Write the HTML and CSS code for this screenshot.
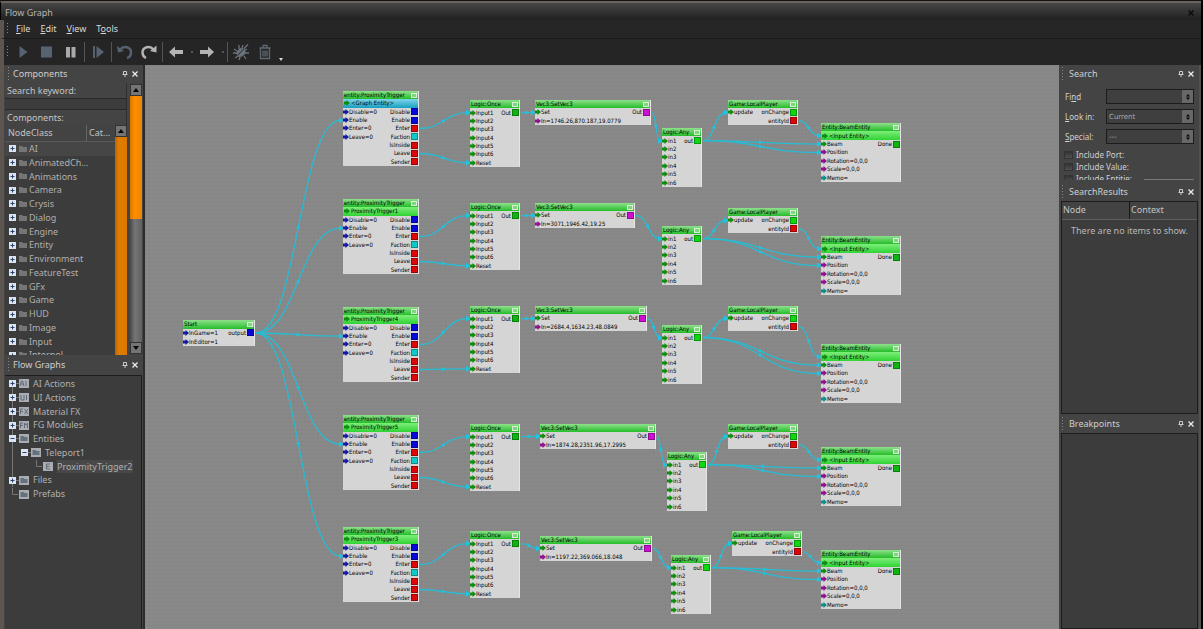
FILE: index.html
```html
<!DOCTYPE html>
<html lang="en">
<head>
<meta charset="utf-8">
<title>Flow Graph</title>
<link rel="stylesheet" href="styles.css">
</head>
<body>
<div class="window">
  <header class="titlebar">
    <h1 class="title">Flow Graph</h1>
    <button class="close" aria-label="Close window"><svg width="6" height="6" viewBox="0 0 6 6"><path d="M.5.5l5 5M5.5.5l-5 5" stroke="#0c0c0c" stroke-width="1.5"/></svg></button>
  </header>
  <nav class="menubar">
    <span class="grip"></span>
    <button class="menu"><u>F</u>ile</button>
    <button class="menu"><u>E</u>dit</button>
    <button class="menu"><u>V</u>iew</button>
    <button class="menu">T<u>o</u>ols</button>
  </nav>
  <div class="toolbar">
    <span class="grip"></span>
    <button class="tool" aria-label="Play"><svg width="16" height="16" viewBox="0 0 16 16"><path d="M4.500 2v12L12.500 8z" fill="#566270"/></svg></button>
    <button class="tool" aria-label="Stop"><svg width="16" height="16" viewBox="0 0 16 16"><rect x="2" y="2.500" width="11" height="11" fill="#566270"/></svg></button>
    <button class="tool" aria-label="Pause"><svg width="16" height="16" viewBox="0 0 16 16"><path d="M3 3h4v10.500H3zM8.500 3h4v10.500h-4z" fill="#a9a9a9"/></svg></button>
    <span class="sep"></span>
    <button class="tool" aria-label="Step"><svg width="16" height="16" viewBox="0 0 16 16"><path d="M3 2h2v12H3zM6.500 2v12L14 8z" fill="#566270"/></svg></button>
    <span class="sep"></span>
    <button class="tool" aria-label="Undo"><svg width="18" height="16" viewBox="0 0 18 16"><path d="M4 5.500C8 1 15 3 15 8.500c0 3-2 5-4 5.500" fill="none" stroke="#566270" stroke-width="2.400"/><path d="M1 2l1 6.500L8 7z" fill="#566270"/></svg></button>
    <button class="tool" aria-label="Redo"><svg width="18" height="16" viewBox="0 0 18 16"><path d="M13.500 5.500C10 1 2.500 3 2.500 8.500c0 3 1.500 4.500 3.500 5.500" fill="none" stroke="#b4b4b4" stroke-width="2.400"/><path d="M16.500 1.500v7L10 7z" fill="#b4b4b4"/></svg></button>
    <span class="sep"></span>
    <button class="tool" aria-label="Back"><svg width="16" height="16" viewBox="0 0 16 16"><path d="M1 8l6-5.500V6h8v4H7v3.500z" fill="#b4b4b4"/></svg></button>
    <span class="dot"></span>
    <button class="tool" aria-label="Forward"><svg width="16" height="16" viewBox="0 0 16 16"><path d="M15 8L9 2.500V6H1v4h8v3.500z" fill="#b4b4b4"/></svg></button>
    <span class="dot"></span>
    <span class="sep"></span>
    <button class="tool" aria-label="Debug"><svg width="18" height="18" viewBox="0 0 18 18"><g stroke="#69717c" stroke-width="1.300" fill="none"><path d="M7 6V2M10 5l1-3M5 8L2 6M5 10H1M6 13l-3 2M8 14l-1 3M12 13l2 3M13 10h4M13 7l2-1"/></g><ellipse cx="9" cy="9.500" rx="5" ry="4" transform="rotate(-40 9 9.500)" fill="#69717c"/><path d="M5.500 12.500L15.500 2" stroke="#252525" stroke-width="1"/><path d="M12 5.500l4-4" stroke="#69717c" stroke-width="1.500"/></svg></button>
    <button class="tool" aria-label="Delete"><svg width="14" height="16" viewBox="0 0 14 16"><g fill="none" stroke="#606873" stroke-width="1.300"><path d="M1.500 4h11M5 4V1.500h4V4M2.500 4v10.500h9V4M5 6.500v6M7 6.500v6M9 6.500v6"/></g></svg></button>
    <button class="overflow" aria-label="More tools"><svg width="4" height="3" viewBox="0 0 4 3"><path d="M0 0h4L2 3z" fill="#ddd"/></svg></button>
  </div>

  <main class="workspace">
    <aside class="dock dock-left">
      <section class="panel panel-components">
        <header class="panel-head"><span class="grip"></span><h2>Components</h2>
          <button class="mini" aria-label="Pin"><svg width="6" height="7" viewBox="0 0 6 7"><path d="M1.500 3.500V.5h3v3M.5 3.500h5M3 3.500V6" fill="none" stroke="#ccc"/></svg></button>
          <button class="mini" aria-label="Close"><svg width="6" height="6" viewBox="0 0 6 6"><path d="M.5.5l5 5M5.500.5l-5 5" stroke="#eee" stroke-width="1.200"/></svg></button>
        </header>
        <div class="components-row">
          <div class="components-main">
            <label class="field-label" for="keyword">Search keyword:</label>
            <input class="keyword" id="keyword" type="text">
            <span class="field-label">Components:</span>
            <div class="class-list">
              <div class="class-main">
                <div class="class-head"><span class="col-class">NodeClass</span><span class="col-cat">Cat...</span></div>
                <ul class="tree" id="classes"></ul>
              </div>
              <div class="scroll scroll-inner"><button class="scroll-btn" aria-label="Scroll up"><svg width="6" height="4" viewBox="0 0 6 4"><path d="M0 4h6L3 0z" fill="#080808"/></svg></button><span class="thumb"></span></div>
            </div>
          </div>
          <div class="scroll scroll-outer"><button class="scroll-btn" aria-label="Scroll up"><svg width="6" height="4" viewBox="0 0 6 4"><path d="M0 4h6L3 0z" fill="#080808"/></svg></button><span class="thumb"></span><span class="track"></span><button class="scroll-btn" aria-label="Scroll down"><svg width="6" height="4" viewBox="0 0 6 4"><path d="M0 0h6L3 4z" fill="#080808"/></svg></button></div>
        </div>
      </section>
      <section class="panel panel-graphs">
        <header class="panel-head"><span class="grip"></span><h2>Flow Graphs</h2>
          <button class="mini" aria-label="Pin"><svg width="6" height="7" viewBox="0 0 6 7"><path d="M1.500 3.500V.5h3v3M.5 3.500h5M3 3.500V6" fill="none" stroke="#ccc"/></svg></button>
          <button class="mini" aria-label="Close"><svg width="6" height="6" viewBox="0 0 6 6"><path d="M.5.5l5 5M5.500.5l-5 5" stroke="#eee" stroke-width="1.200"/></svg></button>
        </header>
        <ul class="tree graphs" id="graphs"></ul>
      </section>
    </aside>

    <div class="canvas" id="canvas"></div>

    <aside class="dock dock-right">
      <section class="panel panel-search">
        <header class="panel-head"><span class="grip"></span><h2>Search</h2>
          <button class="mini" aria-label="Pin"><svg width="6" height="7" viewBox="0 0 6 7"><path d="M1.500 3.500V.5h3v3M.5 3.500h5M3 3.500V6" fill="none" stroke="#ccc"/></svg></button>
          <button class="mini" aria-label="Close"><svg width="6" height="6" viewBox="0 0 6 6"><path d="M.5.5l5 5M5.500.5l-5 5" stroke="#eee" stroke-width="1.200"/></svg></button>
        </header>
        <form class="search-form">
          <div class="combo-row"><label for="find">Fi<u>n</u>d</label><span class="combo"><select id="find"><option></option></select><span class="spin"><svg width="4" height="6" viewBox="0 0 4 6"><path d="M0 2.500h4L2 0zM0 3.500h4L2 6z" fill="#080808"/></svg></span></span></div>
          <div class="combo-row"><label for="lookin"><u>L</u>ook in:</label><span class="combo"><select id="lookin"><option>Current</option></select><span class="spin"><svg width="4" height="6" viewBox="0 0 4 6"><path d="M0 2.500h4L2 0zM0 3.500h4L2 6z" fill="#080808"/></svg></span></span></div>
          <div class="combo-row"><label for="special"><u>S</u>pecial:</label><span class="combo"><select id="special"><option>---</option></select><span class="spin"><svg width="4" height="6" viewBox="0 0 4 6"><path d="M0 2.500h4L2 0zM0 3.500h4L2 6z" fill="#080808"/></svg></span></span></div>
          <div class="checks">
            <label><input type="checkbox">Include Port:</label>
            <label><input type="checkbox">Include Value:</label>
            <label><input type="checkbox">Include Entitie:<span class="find-edge"></span></label>
          </div>
        </form>
      </section>
      <section class="panel panel-results">
        <header class="panel-head"><span class="grip"></span><h2>SearchResults</h2>
          <button class="mini" aria-label="Pin"><svg width="6" height="7" viewBox="0 0 6 7"><path d="M1.500 3.500V.5h3v3M.5 3.500h5M3 3.500V6" fill="none" stroke="#ccc"/></svg></button>
          <button class="mini" aria-label="Close"><svg width="6" height="6" viewBox="0 0 6 6"><path d="M.5.5l5 5M5.500.5l-5 5" stroke="#eee" stroke-width="1.200"/></svg></button>
        </header>
        <div class="well">
          <table class="results">
            <thead><tr><th>Node</th><th>Context</th></tr></thead>
            <tbody><tr><td colspan="2">There are no items to show.</td></tr></tbody>
          </table>
        </div>
      </section>
      <section class="panel panel-breakpoints">
        <header class="panel-head"><span class="grip"></span><h2>Breakpoints</h2>
          <button class="mini" aria-label="Pin"><svg width="6" height="7" viewBox="0 0 6 7"><path d="M1.500 3.500V.5h3v3M.5 3.500h5M3 3.500V6" fill="none" stroke="#ccc"/></svg></button>
          <button class="mini" aria-label="Close"><svg width="6" height="6" viewBox="0 0 6 6"><path d="M.5.5l5 5M5.500.5l-5 5" stroke="#eee" stroke-width="1.200"/></svg></button>
        </header>
        <div class="well"></div>
      </section>
    </aside>
  </main>
</div>
<script src="graph.js"></script>
</body>
</html>
```

FILE: styles.css
```css
* { box-sizing: border-box; }
body {
  margin: 0;
  background: #000;
  color: #c4c4c4;
  font: 9px/14px "Noto Sans", "Open Sans", sans-serif;
}
button {
  margin: 0;
  padding: 0;
  border: 0;
  background: none;
  color: inherit;
  font: inherit;
}
h1, h2 { margin: 0; font-size: inherit; font-weight: normal; }
ul { margin: 0; padding: 0; list-style: none; }
svg { display: block; }

.window {
  display: flex;
  flex-direction: column;
  height: 100vh;
  border-top: 1px solid #111;
  border-right: 2px solid #000;
}
.titlebar {
  display: flex;
  align-items: center;
  justify-content: space-between;
  height: 19px;
  padding: 2px 7px 0 4px;
  border-top: 2px solid #6d625c;
  border-left: 1px solid #000;
  background: linear-gradient(#464646, #202020);
  color: #b4b4b4;
}
.menubar {
  display: flex;
  align-items: center;
  height: 19px;
  padding-left: 3px;
  border-left: 4px solid #5c5550;
  border-bottom: 1px solid #1b1b1b;
  background: #262626;
}
.menu { margin-left: 10px; color: #d8d8d8; }
.menubar .grip + .menu { margin-left: 8px; }
.grip {
  width: 1px;
  height: 12px;
  background: repeating-linear-gradient(#888 0 1px, transparent 1px 3px);
}
.toolbar {
  display: flex;
  align-items: center;
  height: 26px;
  padding-left: 3px;
  border-left: 4px solid #5c5550;
  background: #252525;
}
.toolbar .grip { margin-right: 3px; }
.tool {
  display: flex;
  align-items: center;
  justify-content: center;
  width: 24px;
  height: 22px;
}
.sep { width: 1px; height: 20px; margin: 0 1px; background: #555; }
.dot { width: 7px; height: 2px; border: solid #252525; border-width: 0 2px 0 3px; background: #555; }
.overflow { align-self: flex-end; margin: 0 0 4px 2px; }

.workspace { display: flex; flex: 1; min-height: 0; }
.dock { display: flex; flex-direction: column; background: #444; }
.dock-left {
  width: 145px;
  border-left: 4px solid #5c5550;
  border-right: 2px solid #2c2c2c;
  padding-left: 1px;
}
.dock-right {
  width: 142px;
  padding: 0 1px 0 2px;
  border-right: 2px solid #55504c;
}
.panel { display: flex; flex-direction: column; min-height: 0; }
.panel-head {
  display: flex;
  flex: none;
  align-items: center;
  height: 18px;
  padding-left: 3px;
}
.panel-head h2 { flex: 1; padding-left: 4px; color: #cecece; }
.panel-head .grip { height: 14px; }
.mini { display: flex; align-items: center; justify-content: center; width: 10px; height: 12px; }
.dock-left .mini:last-child { margin-right: 3px; }

.panel-components { height: 290px; }
.components-row { display: flex; flex: 1; min-height: 0; }
.components-main { display: flex; flex: 1; flex-direction: column; min-width: 0; }
.field-label { padding-left: 2px; border-right: 1px solid #303030; line-height: 15px; }
.keyword {
  width: 100%;
  height: 12px;
  margin: 0;
  border: 1px solid #2a2a2a;
  border-left: 0;
  background: #3c3c3c;
  color: #ccc;
  font: inherit;
}
.class-list { display: flex; flex: 1; min-height: 0; }
.class-main { flex: 1; min-width: 0; overflow: hidden; background: #3c3c3c; }
.class-head {
  display: flex;
  height: 17px;
  border-bottom: 1px solid #5a5a5a;
  background: #434343;
  line-height: 15px;
}
.col-class { flex: 1; padding-left: 3px; border-right: 1px solid #666; }
.col-cat { width: 28px; padding-left: 2px; }
.tree { line-height: 1.53; color: #b0b0b0; }
.tree li { display: flex; align-items: center; }
#classes li { padding-left: 4px; }
#classes li:first-child { background: #464646; }
.toggle { flex: none; width: 7px; height: 7px; margin-right: 3px; }
#classes .folder { margin-right: 2px; }
.scroll { display: flex; flex: none; flex-direction: column; width: 12px; }
.scroll-btn {
  display: flex;
  align-items: center;
  justify-content: center;
  height: 12px;
  border: 1px solid #333;
  background: #747474;
}
.scroll .thumb { flex: 1; background: linear-gradient(90deg, #b86400, #e07c00 30%, #dc7800); }
.scroll-outer { margin: 1px 1px 1px 3px; }
.scroll-outer .thumb { background: linear-gradient(90deg, #d87800, #ff8f00 40%, #f08400); }
.scroll-outer .track { flex: 1; background: linear-gradient(90deg, #494949, #757575 40%, #606060); }

.panel-graphs { flex: 1; padding-top: 1px; }
.graphs {
  flex: 1;
  margin: 1px 1px 0 0;
  padding: 1px 0 0 4px;
  border: solid #1d1d1d;
  border-width: 1px 1px 0 0;
  background: #3c3c3c;
}
.graphs li {
  background:
    linear-gradient(#777, #777) 7px 50% / 3px 1px no-repeat,
    linear-gradient(#777, #777) 3px 0 / 1px 100% no-repeat;
}
.graphs li:first-child { background-size: 3px 1px, 1px 50%; background-position: 7px 50%, 3px 100%; }
.graphs li:last-child { background: none; }
.graphs .depth-1 { padding-left: 12px; background-position: 19px 50%, 3px 0; }
.graphs .depth-2 { padding-left: 24px; background-size: 0 0, 1px 100%; }
.graphs .folder, .graphs .badge-icon { margin-right: 4px; }
.graphs .selected { background: #484848; }

.dock-right .mini:last-child { margin-right: 2px; }
.dock-right .panel-head { padding-left: 1px; }
.dock-right .panel-head h2 { padding-left: 6px; }
.panel-search { height: 117px; }
.search-form { display: flex; flex-direction: column; min-height: 0; padding: 6px 4px 2px 2px; gap: 5px; color: #d0d0d0; font-size: 8px; }
.combo-row { display: flex; flex: none; align-items: center; height: 15px; }
.combo-row label { width: 43px; padding-left: 2px; }
.combo { position: relative; flex: 1; display: flex; }
.combo select {
  width: 100%;
  height: 15px;
  padding: 0 2px;
  border: 1px solid #1c1c1c;
  border-radius: 0;
  background: #3f3f3f;
  color: #aaa;
  font: 7px/12px "DejaVu Sans", sans-serif;
  appearance: none;
}
.spin {
  position: absolute;
  top: 1px;
  right: 1px;
  display: flex;
  align-items: center;
  justify-content: center;
  width: 11px;
  height: 13px;
  background: #686868;
  pointer-events: none;
}
.checks { min-height: 0; overflow: hidden; }
.checks label { display: flex; align-items: center; height: 12px; }
.checks input {
  width: 9px;
  height: 8px;
  margin: 0 3px 0 1px;
  border: 1px solid #333;
  background: linear-gradient(#333, #505050);
  appearance: none;
}
.find-edge { flex: 1; height: 1px; margin-left: 12px; background: #777; }
.panel-results { height: 232px; padding-top: 1px; }
.well { flex: 1; border: 1px solid #1d1d1d; background: #3c3c3c; }
.results { width: 100%; border-collapse: collapse; table-layout: fixed; }
.results th { height: 17px; padding: 0 1px; border-bottom: 1px solid #606060; background: #434343; text-align: left; font-weight: normal; line-height: 14px; }
.results th + th { border-left: 1px solid #191919; }
.results td { padding: 4px 0 0; text-align: center; white-space: nowrap; color: #b8b8b8; }
.panel-breakpoints { flex: 1; padding-top: 1px; }

.canvas {
  position: relative;
  flex: 1;
  min-width: 0;
  overflow: hidden;
  background:
    repeating-linear-gradient(90deg, rgba(0,0,0,.02) 0 1px, transparent 1px 4px),
    repeating-linear-gradient(rgba(0,0,0,.02) 0 1px, transparent 1px 4px),
    #898989;
}
.links { position: absolute; top: 0; left: 0; width: 100%; height: 100%; }
.link { fill: none; stroke: #26bcd4; stroke-width: 1.3; }
.arrow { fill: #20c4e0; }
.node {
  position: absolute;
  display: grid;
  grid-template-columns: minmax(0, 1fr) auto;
  grid-auto-rows: minmax(0, 1fr);
  border-right: 1px solid #e6e6e6;
  background: #d5d5d5;
  color: #000;
  font: 6px/8px "DejaVu Sans Condensed", "DejaVu Sans", sans-serif;
  white-space: nowrap;
}
.node-title, .node-entity { grid-column: 1 / 3; display: flex; align-items: center; min-width: 0; }
.node-title { justify-content: space-between; padding: 0 1px; background: linear-gradient(#8fe08c, #25bd2a); }
.node-title .box { flex: none; width: 6px; height: 5px; border: 1px solid #d8f0d6; background: #7ed77c; }
.node-entity { gap: 1px; padding-left: 1px; background: linear-gradient(#7eee7a, #2fd334); }
.node-entity.own { background: linear-gradient(#7fd6ea, #169fc0); }
.in, .out { display: flex; align-items: center; min-width: 0; }
.in { grid-column: 1; }
.in svg, .node-entity svg { flex: none; }
.out { grid-column: 2; justify-content: flex-end; gap: 1px; }
.port { width: 7px; height: 7px; border: 1px solid rgba(0,0,0,.3); }
```

FILE: graph.js
```js
const SVG = "http://www.w3.org/2000/svg";
const VIEW = { x: 145, y: 65 };

const COLORS = {
  blue: "#0808d8", red: "#dc0808", cyan: "#10c8c8", green: "#10b410",
  lime: "#10d810", magenta: "#d010d0", purple: "#901090", navy: "#1818a0",
  leaf: "#108c10", teal: "#108c8c"
};

function folder(kind) {
  if (kind === "class") {
    return '<svg class="folder" width="8" height="8" viewBox="0 0 8 8"><path d="M0 1h3l1 1h4v5H0z" fill="#757575"/></svg>';
  }
  return '<svg class="folder" width="10" height="9" viewBox="0 0 10 9"><path d="M0 0h10v9H0z" fill="#a9adb3"/><path d="M1.500 2h3l1 1h3v4h-7z" fill="#66717e"/></svg>';
}

function toggle(open) {
  const bar = open ? "" : "M3.500 1.500v4";
  return '<button class="toggle" aria-label="' + (open ? "Collapse" : "Expand") + '"><svg width="7" height="7" viewBox="0 0 7 7"><path d="M0 0h7v7H0z" fill="#dbe4f0"/><path d="M1.500 3.500h4' + bar + '" stroke="#26436e"/></svg></button>';
}

const ICONS = {
  AI: "M1 7l1.500-5h1L5 7M2 5h2.500M7 2v5",
  UI: "M2 2v5h3V2M7.500 2v5",
  FX: "M1.500 7V2H4M1.500 4.500H4M5.500 2L9 7M9 2L5.500 7",
  FM: "M1.500 7V2H4M1.500 4.500H4M5.500 7V2l1.500 2 1.500-2v5",
  E: "M7 2H3.500v5H7M3.500 4.500h3"
};

function badge(name) {
  return '<svg class="badge-icon" width="10" height="9" viewBox="0 0 10 9"><path d="M0 0h10v9H0z" fill="#a9adb3"/><path d="' + ICONS[name] + '" fill="none" stroke="#626c78"/></svg>';
}

const classes = ["AI", "AnimatedCh...", "Animations", "Camera", "Crysis", "Dialog", "Engine", "Entity",
  "Environment", "FeatureTest", "GFx", "Game", "HUD", "Image", "Input", "Interpol"];
document.getElementById("classes").innerHTML =
  classes.map(name => "<li>" + toggle(false) + folder("class") + "<span>" + name + "</span></li>").join("");

const stub = w => '<svg class="stub" width="' + w + '" height="13" viewBox="0 0 ' + w + ' 13"><path d="M3.500 0v6.500H' + (w - 1) + '" fill="none" stroke="#777"/></svg>';
document.getElementById("graphs").innerHTML = [
  "<li>" + toggle(false) + badge("AI") + "<span>AI Actions</span></li>",
  "<li>" + toggle(false) + badge("UI") + "<span>UI Actions</span></li>",
  "<li>" + toggle(false) + badge("FX") + "<span>Material FX</span></li>",
  "<li>" + toggle(false) + badge("FM") + "<span>FG Modules</span></li>",
  "<li>" + toggle(true) + folder() + "<span>Entities</span></li>",
  '<li class="depth-1">' + toggle(true) + folder() + "<span>Teleport1</span></li>",
  '<li class="depth-2">' + stub(10) + badge("E") + '<span class="selected">ProximityTrigger2</span></li>',
  "<li>" + toggle(false) + folder() + "<span>Files</span></li>",
  "<li>" + stub(10) + folder() + "<span>Prefabs</span></li>"
].join("");

const canvas = document.getElementById("canvas");
const links = document.createElementNS(SVG, "svg");
links.setAttribute("class", "links");
canvas.append(links);

function arrowIcon(color) {
  return '<svg width="6" height="6" viewBox="0 0 6 6"><path d="M0 1.500h2.500V0L6 3 2.500 6V4.500H0z" fill="' + COLORS[color] + '"/></svg>';
}

function addNode(x, y, w, h, spec) {
  const el = document.createElement("article");
  el.className = "node";
  el.style.cssText = `left:${x - VIEW.x}px;top:${y - VIEW.y}px;width:${w}px;height:${h}px`;
  let html = `<div class="node-title"><span>${spec.title}</span><span class="box"></span></div>`;
  const first = spec.entity ? 2 : 1;
  if (spec.entity) {
    html += `<div class="node-entity ${spec.own ? "own" : ""}">${arrowIcon("leaf")}<span>${spec.entity}</span></div>`;
  }
  spec.ins.forEach(([color, label], i) => {
    html += `<div class="in" style="grid-row:${first + 1 + i}">${arrowIcon(color)}<span>${label}</span></div>`;
  });
  spec.outs.forEach(([color, label], i) => {
    html += `<div class="out" style="grid-row:${first + 1 + i}"><span>${label}</span><span class="port" style="background:${COLORS[color]}"></span></div>`;
  });
  el.innerHTML = html;
  canvas.append(el);
  const rows = first + Math.max(spec.ins.length, spec.outs.length);
  const rowY = r => y - VIEW.y + h * (r + 0.5) / rows;
  return {
    in: i => [x - VIEW.x, rowY(first + i)],
    out: i => [x + w - VIEW.x + 1, rowY(first + i)]
  };
}

function addPath(cls, d) {
  const p = document.createElementNS(SVG, "path");
  p.setAttribute("class", cls);
  p.setAttribute("d", d);
  links.append(p);
  return p;
}

function connect([x1, y1], [x2, y2]) {
  const end = x2 - 2;
  const bend = (end - x1) / 2;
  const path = addPath("link", `M${x1} ${y1}C${x1 + bend} ${y1} ${end - bend} ${y2} ${end} ${y2}`);
  addPath("arrow", `M${x2 - 4} ${y2 - 3}L${x2 + 1} ${y2}L${x2 - 4} ${y2 + 3}z`);
  const len = path.getTotalLength();
  const a = path.getPointAtLength(len / 2 - 1);
  const b = path.getPointAtLength(len / 2 + 1);
  const angle = Math.atan2(b.y - a.y, b.x - a.x) * 180 / Math.PI;
  addPath("arrow", "M-2-2L2 0L-2 2z").setAttribute("transform", `translate(${(a.x + b.x) / 2} ${(a.y + b.y) / 2}) rotate(${angle})`);
}

const start = addNode(183, 320, 72, 26, {
  title: "Start", ins: [["navy", "InGame=1"], ["navy", "InEditor=1"]], outs: [["blue", "output"]]
});

const chains = [
  { entity: "&lt;Graph Entity&gt;", own: true, trigger: 91, once: 100, vec: [535, 100, 116, "1746.26,870.187,19.0779"], any: [662, 128], player: [728, 100], beam: 123 },
  { entity: "ProximityTrigger1", trigger: 199, once: 203, vec: [535, 203, 100, "3071,1946.42,19.25"], any: [662, 226], player: [728, 208], beam: 236 },
  { entity: "ProximityTrigger4", trigger: 307, once: 306, vec: [535, 306, 112, "2684.4,1634.23,48.0849"], any: [662, 325], player: [728, 306], beam: 344 },
  { entity: "ProximityTrigger5", trigger: 415, once: 424, vec: [540, 424, 116, "1874.28,2351.96,17.2995"], any: [667, 452], player: [728, 424], beam: 447 },
  { entity: "ProximityTrigger3", trigger: 527, once: 531, vec: [540, 536, 112, "1197.22,369.066,18.048"], any: [671, 555], player: [732, 531], beam: 550 }
];

for (const c of chains) {
  const trigger = addNode(343, c.trigger, 76, 75, {
    title: "entity:ProximityTrigger", entity: c.entity, own: c.own,
    ins: [["navy", "Disable=0"], ["navy", "Enable"], ["navy", "Enter=0"], ["navy", "Leave=0"]],
    outs: [["blue", "Disable"], ["blue", "Enable"], ["red", "Enter"], ["cyan", "Faction"], ["red", "IsInside"], ["red", "Leave"], ["red", "Sender"]]
  });
  const once = addNode(470, c.once, 50, 67, {
    title: "Logic:Once",
    ins: ["Input1", "Input2", "Input3", "Input4", "Input5", "Input6", "Reset"].map(n => ["leaf", n]),
    outs: [["green", "Out"]]
  });
  const vec = addNode(c.vec[0], c.vec[1], c.vec[2], 25, {
    title: "Vec3:SetVec3", ins: [["leaf", "Set"], ["purple", "In=" + c.vec[3]]], outs: [["magenta", "Out"]]
  });
  const any = addNode(c.any[0], c.any[1], 40, 59, {
    title: "Logic:Any", ins: ["in1", "in2", "in3", "in4", "in5", "in6"].map(n => ["leaf", n]), outs: [["lime", "out"]]
  });
  const player = addNode(c.player[0], c.player[1], 70, 25, {
    title: "Game:LocalPlayer", ins: [["leaf", "update"]], outs: [["lime", "onChange"], ["red", "entityId"]]
  });
  const beam = addNode(821, c.beam, 80, 59, {
    title: "Entity:BeamEntity", entity: "&lt;Input Entity&gt;",
    ins: [["leaf", "Beam"], ["purple", "Position"], ["purple", "Rotation=0,0,0"], ["purple", "Scale=0,0,0"], ["teal", "Memo="]],
    outs: [["green", "Done"]]
  });
  connect(start.out(0), trigger.in(1));
  connect(trigger.out(2), once.in(0));
  connect(trigger.out(5), once.in(6));
  connect(once.out(0), vec.in(0));
  connect(vec.out(0), any.in(0));
  connect(any.out(0), player.in(0));
  connect(player.out(1), beam.in(-1));
  connect(any.out(0), beam.in(0));
  connect(any.out(0), beam.in(1));
}
```
